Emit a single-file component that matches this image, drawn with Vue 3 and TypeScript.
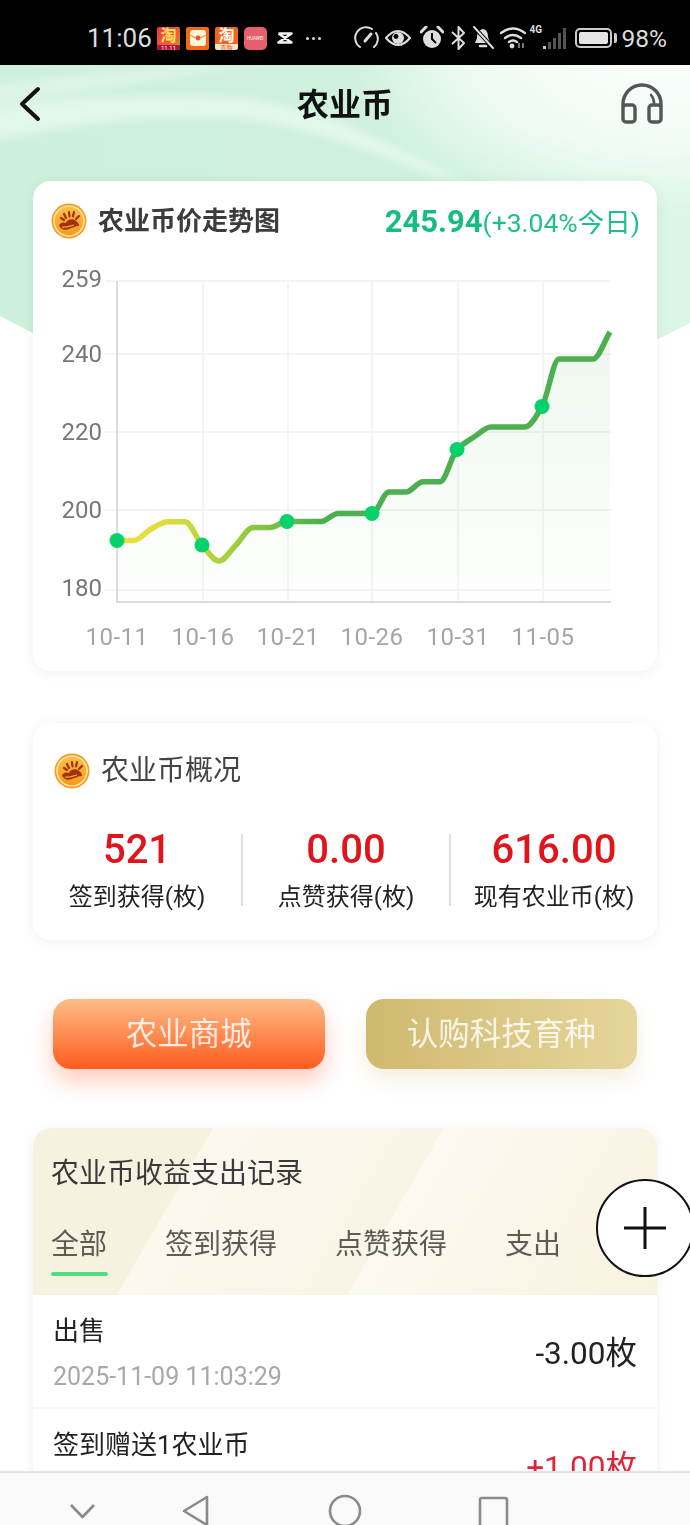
<template>
  <div class="page">
    <!-- green header wash, sits behind everything -->
    <svg class="wash" width="690" height="420" viewBox="0 0 690 420">
      <defs>
        <linearGradient id="washBase" x1="0" y1="0" x2="1" y2="0">
          <stop offset="0" stop-color="#ccf0db" />
          <stop offset="0.55" stop-color="#cff1dd" />
          <stop offset="1" stop-color="#dcf6e6" />
        </linearGradient>
        <radialGradient id="washGlow" cx="0.85" cy="0" r="0.75">
          <stop offset="0" stop-color="#fff" stop-opacity="0.9" />
          <stop offset="0.6" stop-color="#fff" stop-opacity="0.6" />
          <stop offset="1" stop-color="#fff" stop-opacity="0" />
        </radialGradient>
        <filter id="washBlur" x="-20%" y="-20%" width="140%" height="140%">
          <feGaussianBlur stdDeviation="4" />
        </filter>
        <clipPath id="washClip">
          <path d="M0 251 Q345 440 690 258 V0 H0 Z" />
        </clipPath>
      </defs>
      <path d="M0 251 Q345 440 690 258 V0 H0 Z" fill="url(#washBase)" />
      <g clip-path="url(#washClip)">
        <g filter="url(#washBlur)">
          <path d="M300 -20 H710 V210 C620 170 520 130 440 100 C390 70 350 40 300 -20 Z" fill="url(#washGlow)" />
          <path d="M-20 45 C90 28 190 28 250 34 C330 44 400 85 480 125 C400 100 320 62 240 54 C160 48 80 58 -20 78 Z" fill="#fff" opacity="0.45" />
          <path d="M-20 20 C80 8 170 0 270 -5 C200 10 120 22 -20 42 Z" fill="#fff" opacity="0.3" />
        </g>
      </g>
    </svg>

    <div class="status">
      <div class="status-left">
        <span class="clock">11:06</span>
        <span class="app app-tb"><b>淘</b><i>11.11</i></span>
        <span class="app app-red">
          <svg width="18" height="16" viewBox="0 0 18 16">
            <rect x="1" y="0" width="16" height="16" rx="3" fill="#fff4dc" />
            <path d="M1 5 Q9 11 17 5" fill="none" stroke="#f3a14a" stroke-width="1.5" />
            <circle cx="9" cy="8" r="2.4" fill="#e8552a" />
          </svg>
        </span>
        <span class="app app-tb2"><b>淘</b><i>直购</i></span>
        <span class="app app-hw"><em>HUAWEI</em></span>
        <svg class="capcut" width="16" height="12" viewBox="0 0 16 12">
          <path d="M1.5 1.5 H14.5 L1.5 10.5 H14.5 L1.5 1.5" fill="none" stroke="#f2f2f2" stroke-width="2.6" stroke-linejoin="round" />
        </svg>
        <span class="more"><i></i><i></i><i></i></span>
      </div>
      <div class="status-right">
        <svg width="26" height="24" viewBox="0 0 26 24">
          <path d="M6 21 A10.5 10.5 0 0 1 18 3 M22 7 A10.5 10.5 0 0 1 20 21" fill="none" stroke="#ddd" stroke-width="2" stroke-linecap="round" />
          <path d="M11 15 L17 8" stroke="#ddd" stroke-width="3" stroke-linecap="round" />
        </svg>
        <svg class="ml5" width="26" height="18" viewBox="0 0 26 18">
          <path d="M1 9 Q13 -5 25 9 Q13 23 1 9 Z" fill="none" stroke="#ddd" stroke-width="2.2" />
          <circle cx="13" cy="9" r="6" fill="#ddd" />
          <circle cx="11" cy="7.5" r="2.4" fill="#000" />
        </svg>
        <svg class="ml9" width="24" height="24" viewBox="0 0 24 24">
          <circle cx="12" cy="13" r="9" fill="#ddd" />
          <path d="M12 7 V13 L16 17" fill="none" stroke="#000" stroke-width="2" />
          <path d="M1 6 L6 1 M18 1 L23 6" stroke="#ddd" stroke-width="3" stroke-linecap="round" />
        </svg>
        <svg class="ml7" width="15" height="24" viewBox="0 0 15 24">
          <path d="M1 6 L13 17 L7.5 23 V1 L13 7 L1 18" fill="none" stroke="#ddd" stroke-width="2" stroke-linejoin="round" />
        </svg>
        <svg class="ml6" width="23" height="24" viewBox="0 0 23 24">
          <path d="M11 3 C6 4 5 8 5 12 L3 17 H18 L16 11 C16 7 15 4 11 3 Z" fill="#ddd" />
          <path d="M8 20 H14" stroke="#ddd" stroke-width="2.5" stroke-linecap="round" />
          <path d="M2 1 L21 22" stroke="#000" stroke-width="4" />
          <path d="M2 1 L21 22" stroke="#ddd" stroke-width="2" stroke-linecap="round" />
        </svg>
        <svg class="ml5" width="26" height="22" viewBox="0 0 26 22">
          <path d="M1 6 Q13 -3 25 6 M5 11 Q13 5 21 11 M9 15 Q13 12 17 15" fill="none" stroke="#ddd" stroke-width="2.4" stroke-linecap="round" />
          <circle cx="12" cy="19" r="2.4" fill="#ddd" />
          <path d="M19 16 V21 M23 16 V21" stroke="#aaa" stroke-width="1.4" />
        </svg>
        <span class="signal ml4">
          <small>4G</small>
          <svg width="23" height="22" viewBox="0 0 23 22">
            <rect x="0" y="18" width="3" height="3" fill="#ccc" />
            <rect x="5" y="14" width="3" height="7" fill="#555" />
            <rect x="10" y="10" width="3" height="11" fill="#555" />
            <rect x="15" y="5" width="3" height="16" fill="#555" />
            <rect x="20" y="0" width="3" height="21" fill="#555" />
          </svg>
        </span>
        <span class="battery"><span class="battery-fill"></span></span>
        <span class="percent">98%</span>
      </div>
    </div>

    <header class="nav">
      <svg class="nav-back" width="24" height="36" viewBox="0 0 24 36">
        <path d="M20 3 L4 18 L20 33" fill="none" stroke="#111" stroke-width="4" stroke-linecap="round" stroke-linejoin="round" />
      </svg>
      <h1 class="nav-title">农业币</h1>
      <svg class="nav-service" width="44" height="42" viewBox="0 0 44 42">
        <path d="M3 24 V21 A19 19 0 0 1 41 21 V24" fill="none" stroke="#555" stroke-width="3.4" />
        <path d="M31 12 A12 12 0 0 1 34 20" fill="none" stroke="#555" stroke-width="2.6" stroke-linecap="round" />
        <rect x="3" y="22" width="12" height="17" rx="3" fill="none" stroke="#555" stroke-width="3.4" />
        <rect x="29" y="22" width="12" height="17" rx="3" fill="none" stroke="#555" stroke-width="3.4" />
      </svg>
    </header>

    <main class="main">
      <section class="card trend">
        <div class="trend-head">
          <div class="trend-title">
            <svg class="coin" width="36" height="36" viewBox="0 0 36 36">
              <defs>
                <linearGradient id="coinFill" x1="0" y1="0" x2="0" y2="1">
                  <stop offset="0" stop-color="#fbc04a" />
                  <stop offset="0.6" stop-color="#f8a92c" />
                  <stop offset="1" stop-color="#f39a1e" />
                </linearGradient>
                <symbol id="coinMark" viewBox="0 0 36 36">
                  <circle cx="18" cy="18" r="17.5" fill="#f59a22" />
                  <circle cx="18" cy="18" r="15" fill="url(#coinFill)" stroke="#fde49a" stroke-width="1.6" />
                  <path d="M8 22 C10 19 13 19 15 20 C16 16 22 15 25 18 C27 19 28 21 28 23 C24 23 21 25 18 26 C14 28 9 26 8 22 Z" fill="#a3300f" />
                  <path d="M11 24 C15 25 19 23 23 22" fill="none" stroke="#f8a92c" stroke-width="1.2" />
                  <path d="M10 15 L13 17 M13 11 L15 15 M18 9 L18.5 13.5 M23 9 L22 13.5 M28 13 L25 16" stroke="#a3300f" stroke-width="2.2" stroke-linecap="round" />
                </symbol>
              </defs>
              <use href="#coinMark" />
            </svg>
            <span>农业币价走势图</span>
          </div>
          <div class="trend-price"><strong>245.94</strong>(+3.04%今日)</div>
        </div>

        <!-- viewBox keeps the plot in page coordinates, easier to compare -->
        <svg class="chart" width="624" height="411" viewBox="33 260 624 411">
          <defs>
            <linearGradient id="lineStroke" gradientUnits="userSpaceOnUse" x1="117" y1="0" x2="320" y2="0">
              <stop offset="0" stop-color="#eee13c" />
              <stop offset="0.25" stop-color="#dcdc3c" />
              <stop offset="0.55" stop-color="#a5cf3c" />
              <stop offset="1" stop-color="#4caf50" />
            </linearGradient>
            <linearGradient id="areaFill" gradientUnits="userSpaceOnUse" x1="0" y1="332" x2="0" y2="602">
              <stop offset="0" stop-color="#4caf50" stop-opacity="0.1" />
              <stop offset="1" stop-color="#4caf50" stop-opacity="0.01" />
            </linearGradient>
          </defs>
          <g class="grid">
            <line v-for="t in yTicks" :key="t.label" x1="105" x2="611" :y1="t.y" :y2="t.y" />
            <line v-for="t in xTicks.slice(1)" :key="t.label" :x1="t.x" :x2="t.x" y1="281" y2="602" />
          </g>
          <path :d="areaPath" fill="url(#areaFill)" />
          <path class="axis" d="M117 281 V602 H611" />
          <path :d="linePath" fill="none" stroke="url(#lineStroke)" stroke-width="5.5" stroke-linejoin="round" />
          <circle v-for="d in dots" :key="d.x" :cx="d.x" :cy="d.y" r="7.5" fill="#07d16a" />
          <text v-for="t in yTicks" :key="t.label" class="y-label" x="102" :y="t.textY">{{ t.label }}</text>
          <text v-for="t in xTicks" :key="t.label" class="x-label" :x="t.x" y="645">{{ t.label }}</text>
        </svg>
      </section>

      <section class="card overview">
        <div class="overview-title">
          <svg class="coin" width="36" height="36" viewBox="0 0 36 36"><use href="#coinMark" /></svg>
          <span>农业币概况</span>
        </div>
        <div class="stats">
          <div v-for="s in stats" :key="s.label" class="stat">
            <div class="stat-num">{{ s.value }}</div>
            <div class="stat-label">{{ s.label }}</div>
          </div>
        </div>
      </section>

      <div class="actions">
        <button class="btn btn-orange"><span>农业商城</span></button>
        <button class="btn btn-gold"><span>认购科技育种</span></button>
      </div>

      <section class="card records">
        <div class="records-head">
          <div class="records-title">农业币收益支出记录</div>
          <div class="tabs">
            <div v-for="(t, i) in tabs" :key="t" class="tab" :class="{ active: i === 0 }">{{ t }}</div>
          </div>
        </div>
        <div v-for="r in records" :key="r.title" class="record">
          <div>
            <div class="record-title">{{ r.title }}</div>
            <div class="record-time">{{ r.time }}</div>
          </div>
          <div class="record-amount" :class="{ plus: r.amount.startsWith('+') }">{{ r.amount }}</div>
        </div>
      </section>
    </main>

    <button class="fab" aria-label="add">
      <svg width="44" height="44" viewBox="0 0 44 44">
        <path d="M1 22 H43 M22 1 V43" stroke="#111" stroke-width="3" />
      </svg>
    </button>

    <nav class="sysnav">
      <svg width="690" height="52" viewBox="0 1473 690 52">
        <g fill="none" stroke="#8a8a8a" stroke-width="2.6" stroke-linejoin="round">
          <path d="M71 1505 L82.5 1517 L94 1505" />
          <path d="M207 1497 L184 1511 L207 1525 Z" />
          <circle cx="345" cy="1511" r="15" />
          <rect x="480" y="1498" width="27" height="30" rx="2" />
        </g>
      </svg>
    </nav>
  </div>
</template>

<script setup lang="ts">
import { computed } from 'vue'

interface Point {
  x: number
  y: number
}

const stepX = 17
const startX = 117
const baseY = 602

// one sample per day, already in plot pixels
const samples = [
  540.5, 540.5, 529, 521.7, 521.7, 545, 561, 545, 527.5, 527.5, 521.5, 521.5, 521.5, 513.5, 513.5,
  513.5, 492, 492, 481.7, 481.7, 449.5, 437, 427, 427, 427, 406.5, 359, 359, 359, 332,
]

const points = computed<Point[]>(() =>
  samples.map((y, i) => ({ x: startX + i * stepX, y })),
)

const dots = computed<Point[]>(() => points.value.filter((_, i) => i % 5 === 0))

// monotone cubic, flat on plateaus like the chart lib's smooth line
const linePath = computed<string>(() => {
  const pts = points.value
  const slopes = pts.slice(1).map((p, i) => (p.y - pts[i].y) / stepX)
  const tangents = pts.map((_, i) => {
    if (i === 0) return slopes[0]
    if (i === pts.length - 1) return slopes[i - 1]
    const a = slopes[i - 1]
    const b = slopes[i]
    if (a * b <= 0) return 0
    return (2 * a * b) / (a + b)
  })
  let d = `M${pts[0].x} ${pts[0].y}`
  for (let i = 1; i < pts.length; i++) {
    const h = stepX / 3
    d += ` C${pts[i - 1].x + h} ${pts[i - 1].y + tangents[i - 1] * h} ${pts[i].x - h} ${pts[i].y - tangents[i] * h} ${pts[i].x} ${pts[i].y}`
  }
  return d
})

const areaPath = computed<string>(() => {
  const last = points.value[points.value.length - 1]
  return `${linePath.value} L${last.x} ${baseY} L${startX} ${baseY} Z`
})

const yTicks = [
  { label: '259', y: 281, textY: 287 },
  { label: '240', y: 354, textY: 362 },
  { label: '220', y: 432, textY: 440 },
  { label: '200', y: 510, textY: 518 },
  { label: '180', y: 590, textY: 596 },
]

const xTicks = [
  { label: '10-11', x: 117 },
  { label: '10-16', x: 203 },
  { label: '10-21', x: 288 },
  { label: '10-26', x: 372 },
  { label: '10-31', x: 458 },
  { label: '11-05', x: 543 },
]

const stats = [
  { value: '521', label: '签到获得(枚)' },
  { value: '0.00', label: '点赞获得(枚)' },
  { value: '616.00', label: '现有农业币(枚)' },
]

const tabs = ['全部', '签到获得', '点赞获得', '支出']

const records = [
  { title: '出售', time: '2025-11-09 11:03:29', amount: '-3.00枚' },
  { title: '签到赠送1农业币', time: '2025-11-09 08:12:40', amount: '+1.00枚' },
]
</script>

<style>
html,
body {
  margin: 0;
  background: #fff;
}
</style>

<style scoped>
.page {
  position: relative;
  width: 690px;
  height: 1525px;
  overflow: hidden;
  background: #fff;
  font-family: Roboto, 'Noto Sans CJK SC', sans-serif;
  color: #222;
}

.wash {
  position: absolute;
  left: 0;
  top: 65px;
}

/* Status bar */
.status {
  position: relative;
  height: 65px;
  box-sizing: border-box;
  padding: 11px 23px 0 87px;
  background: #000;
  display: flex;
  align-items: center;
  justify-content: space-between;
  color: #ddd;
}
.status-left,
.status-right {
  display: flex;
  align-items: center;
}
.clock {
  font-size: 26px;
  width: 70px;
}
.app {
  position: relative;
  width: 23px;
  height: 23px;
  margin-right: 6px;
  border-radius: 2px;
  overflow: hidden;
  display: flex;
  flex-direction: column;
  align-items: center;
  font-style: normal;
}
.app b {
  font-size: 16px;
  line-height: 18px;
  font-weight: 700;
}
.app i {
  font-size: 6px;
  line-height: 5px;
  width: 100%;
  text-align: center;
  font-style: normal;
}
.app-tb {
  background: linear-gradient(135deg, #f0304a, #ef6a2c 70%, #7ac03a);
  color: #ffe066;
}
.app-tb i {
  background: #b3123a;
  color: #fff;
}
.app-red {
  background: #f26a12;
  justify-content: center;
}
.app-tb2 {
  background: linear-gradient(180deg, #f4651a 72%, #f8e3c8 72%);
  color: #fff;
}
.app-tb2 i {
  color: #d8552a;
}
.app-hw {
  background: #e6606b;
  border-radius: 5px;
  justify-content: center;
}
.app-hw em {
  font-style: normal;
  font-size: 5px;
  color: #fff;
  transform: scale(0.9);
}
.capcut {
  margin-left: 4px;
}
.more {
  margin-left: 13px;
  display: flex;
  gap: 3px;
}
.more i {
  width: 3px;
  height: 3px;
  border-radius: 50%;
  background: #ddd;
}
.ml4 {
  margin-left: 4px;
}
.ml5 {
  margin-left: 5px;
}
.ml6 {
  margin-left: 6px;
}
.ml7 {
  margin-left: 7px;
}
.ml9 {
  margin-left: 9px;
}
.signal {
  position: relative;
  width: 36px;
  height: 24px;
  display: flex;
  justify-content: flex-end;
  align-items: flex-end;
}
.signal small {
  position: absolute;
  left: 0;
  top: -1px;
  font-size: 10px;
  font-weight: 700;
  line-height: 10px;
}
.battery {
  position: relative;
  width: 37px;
  height: 20px;
  margin-left: 9px;
  box-sizing: border-box;
  border: 2px solid #ccc;
  border-radius: 5px;
  padding: 2px;
}
.battery::after {
  content: '';
  position: absolute;
  right: -7px;
  top: 3px;
  width: 3px;
  height: 10px;
  border-radius: 0 2px 2px 0;
  background: #ccc;
}
.battery-fill {
  display: block;
  height: 100%;
  background: #e4e4e4;
  border-radius: 2px;
}
.percent {
  margin-left: 10px;
  font-size: 24.5px;
}

/* Nav */
.nav {
  position: relative;
  height: 78px;
  display: flex;
  align-items: center;
  justify-content: space-between;
  padding: 0 26px 0 18px;
}
.nav-title {
  margin: 0;
  padding-bottom: 5px;
  font-size: 32px;
  font-weight: 700;
  color: #111;
  position: absolute;
  left: 0;
  right: 0;
  text-align: center;
}

/* Cards */
.main {
  position: relative;
  padding: 38px 33px 0;
}
.card {
  background: #fff;
  border-radius: 18px;
  box-shadow: 0 2px 14px rgba(0, 0, 0, 0.06);
}
.trend-head {
  height: 79px;
  box-sizing: border-box;
  padding: 0 17px 0 18px;
  display: flex;
  align-items: center;
  justify-content: space-between;
}
.trend-title {
  display: flex;
  align-items: center;
  gap: 11px;
  font-size: 26px;
  font-weight: 700;
  color: #3c3c3c;
}
.trend-title span {
  padding-bottom: 4px;
}
.trend-price {
  font-size: 26.5px;
  color: #1fbf85;
}
.trend-price strong {
  font-size: 31px;
  font-weight: 700;
  color: #16bd80;
}
.coin {
  display: block;
  flex: none;
}
.chart {
  display: block;
}
.grid line {
  stroke: #f4f4f4;
  stroke-width: 2;
}
.axis {
  fill: none;
  stroke: #dcdcdc;
  stroke-width: 2;
}
.y-label,
.x-label {
  font-size: 24px;
}
.y-label {
  text-anchor: end;
  fill: #777;
}
.x-label {
  text-anchor: middle;
  fill: #a5a5a5;
  letter-spacing: 0.5px;
}

/* Overview */
.overview {
  margin-top: 52px;
  height: 217px;
  box-sizing: border-box;
  padding-top: 30px;
}
.overview-title {
  display: flex;
  align-items: center;
  gap: 11px;
  padding-left: 21px;
  font-size: 28px;
  line-height: 36px;
  color: #444;
}
.stats {
  margin-top: 45px;
  display: grid;
  grid-template-columns: repeat(3, 1fr);
}
.stat {
  text-align: center;
  height: 72px;
  box-sizing: border-box;
  padding-top: 3px;
  display: flex;
  flex-direction: column;
  justify-content: center;
  white-space: nowrap;
}
.stat + .stat {
  border-left: 2px solid #dedede;
}
.stat-num {
  font-size: 40px;
  line-height: 46px;
  font-weight: 500;
  color: #e0141b;
  margin-top: -3px;
}
.stat-label {
  font-size: 24px;
  line-height: 32px;
  margin-top: 8px;
  color: #222;
}

/* Buttons */
.actions {
  margin-top: 59px;
  padding: 0 20px;
  display: flex;
  gap: 41px;
}
.btn {
  flex: 1;
  height: 70px;
  padding: 0 0 6px;
  border: 0;
  border-radius: 18px;
  font-family: inherit;
  font-size: 31.5px;
  color: rgba(255, 255, 255, 0.82);
}
.btn-orange {
  background: linear-gradient(180deg, #fcbd87, #ff5b1e);
  box-shadow: 0 12px 22px rgba(255, 96, 50, 0.32);
}
.btn-gold {
  background: linear-gradient(90deg, #cfb96f, #e6d69b);
  box-shadow: 0 10px 20px rgba(205, 185, 110, 0.24);
}

/* Records */
.records {
  margin-top: 59px;
  overflow: hidden;
}
.records-head {
  height: 167px;
  box-sizing: border-box;
  padding: 28px 0 0 18px;
  background: linear-gradient(
    120deg,
    #f7f1df 0,
    #f7f1df 25%,
    #fcf8ee 25%,
    #f9f4e5 57%,
    #fcf9f0 57%,
    #f8f2df 100%
  );
}
.records-title {
  font-size: 28px;
  line-height: 36px;
  color: #3a3a3a;
}
.tabs {
  margin-top: 35px;
  display: flex;
  gap: 58px;
}
.tab {
  position: relative;
  font-size: 28px;
  line-height: 36px;
  color: #5c5c55;
}
.tab.active::after {
  content: '';
  position: absolute;
  left: 0;
  right: -1px;
  top: 45px;
  height: 4px;
  border-radius: 2px;
  background: #4fdc86;
}
.record {
  height: 114px;
  box-sizing: border-box;
  padding: 17px 20px 0;
  display: flex;
  align-items: center;
  justify-content: space-between;
  border-bottom: 2px solid #f6f6f6;
}
.record > div:first-child {
  margin-top: -13px;
}
.record-title {
  font-size: 26px;
  line-height: 36px;
  color: #222;
}
.record-time {
  font-size: 25px;
  line-height: 32px;
  margin-top: 12px;
  color: #a8a8a8;
}
.record-amount {
  font-size: 31.5px;
  color: #222;
  margin-top: -19px;
}
.record-amount.plus {
  color: #e0243a;
}

/* Overlays */
.fab {
  position: absolute;
  left: 596px;
  top: 1179px;
  width: 98px;
  height: 98px;
  padding: 0;
  box-sizing: border-box;
  border: 2px solid #111;
  border-radius: 50%;
  background: #fff;
  display: flex;
  align-items: center;
  justify-content: center;
}
.sysnav {
  position: absolute;
  left: 0;
  right: 0;
  bottom: 0;
  height: 54px;
  box-sizing: border-box;
  overflow: hidden;
  background: #fafafa;
  border-top: 2px solid #e4e4e4;
}
.sysnav svg {
  display: block;
}
</style>
